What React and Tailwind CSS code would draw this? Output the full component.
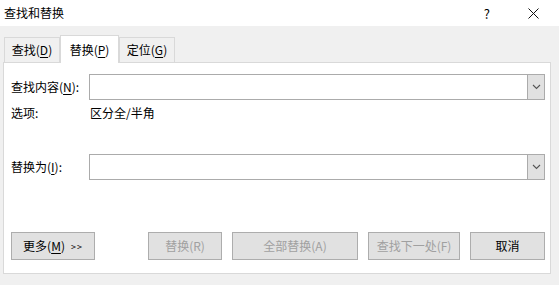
import React from 'react'

const U = ({ children }) => <span className="underline underline-offset-[2px]">{children}</span>

const Chevron = () => (
    <svg width="9" height="6" viewBox="0 0 9 6" fill="none">
        <path d="M1 1l3.5 3.5L8 1" stroke="#555" strokeWidth="1.1" />
    </svg>
)

const Combo = () => (
    <div className="flex-1 h-[26px] bg-white border border-[#ababab] flex justify-end">
        <div className="w-[17px] h-full bg-[#e1e1e1] border-l border-[#ababab] flex items-center justify-center">
            <Chevron />
        </div>
    </div>
)

const Btn = ({ children, width, disabled, className = '' }) => (
    <div
        className={
            'h-[28px] bg-[#e1e1e1] border border-[#adadad] flex items-center justify-center ' +
            (disabled ? 'text-[#a0a0a0] ' : 'text-black ') +
            className
        }
        style={{ width }}
    >
        {children}
    </div>
)

const Tab = ({ children, active, width }) => (
    <div
        className={
            active
                ? 'h-[28px] bg-white border border-b-0 border-[#d9d9d9] flex items-center justify-center relative top-[1px] -mt-[2px]'
                : 'h-[25px] bg-[#f0f0f0] border border-b-0 border-[#d9d9d9] flex items-center justify-center'
        }
        style={{ width }}
    >
        {children}
    </div>
)

export default function App() {
    return (
        <div
            className="w-[559px] h-[285px] bg-[#f0f0f0] text-[12px] text-black leading-none flex flex-col"
            style={{ fontFamily: '"Noto Sans CJK SC", "Noto Sans", sans-serif' }}
        >
            <div className="h-[26px] bg-white flex items-center pl-[4px] pr-[20px]">
                <span className="flex-1">查找和替换</span>
                <span className="mr-[38px] text-[13px]">?</span>
                <svg width="11" height="11" viewBox="0 0 11 11">
                    <path d="M0.5 0.5l10 10M10.5 0.5l-10 10" stroke="#111" strokeWidth="1" />
                </svg>
            </div>

            <div className="flex items-end pl-[4px] mt-[11px] h-[25px]">
                <Tab width={56}>
                    查找(<U>D</U>)
                </Tab>
                <Tab active width={59}>
                    替换(<U>P</U>)
                </Tab>
                <Tab width={56}>
                    定位(<U>G</U>)
                </Tab>
            </div>

            <div className="mx-[3px] w-[548px] h-[212px] bg-white border border-[#d9d9d9] flex flex-col pl-[7px] pr-[5px]">
                <div className="flex items-center mt-[11px]">
                    <div className="w-[78px]">
                        查找内容(<U>N</U>):
                    </div>
                    <Combo />
                </div>
                <div className="flex items-center mt-[7px] h-[12px]">
                    <div className="w-[79px]">选项:</div>
                    <div>区分全/半角</div>
                </div>
                <div className="flex items-center mt-[35px]">
                    <div className="w-[78px]">
                        替换为(<U>I</U>):
                    </div>
                    <Combo />
                </div>
                <div className="flex items-center mt-[52px]">
                    <Btn width={84}>
                        <span>
                            更多(<U>M</U>)
                        </span>
                        <span className="ml-[6px] text-[9px] tracking-[1px]">&gt;&gt;</span>
                    </Btn>
                    <Btn width={74} disabled className="ml-[53px]">
                        替换(R)
                    </Btn>
                    <Btn width={126} disabled className="ml-[10px]">
                        全部替换(A)
                    </Btn>
                    <Btn width={92} disabled className="ml-[10px]">
                        查找下一处(F)
                    </Btn>
                    <Btn width={75} className="ml-[10px]">
                        取消
                    </Btn>
                </div>
            </div>
        </div>
    )
}
